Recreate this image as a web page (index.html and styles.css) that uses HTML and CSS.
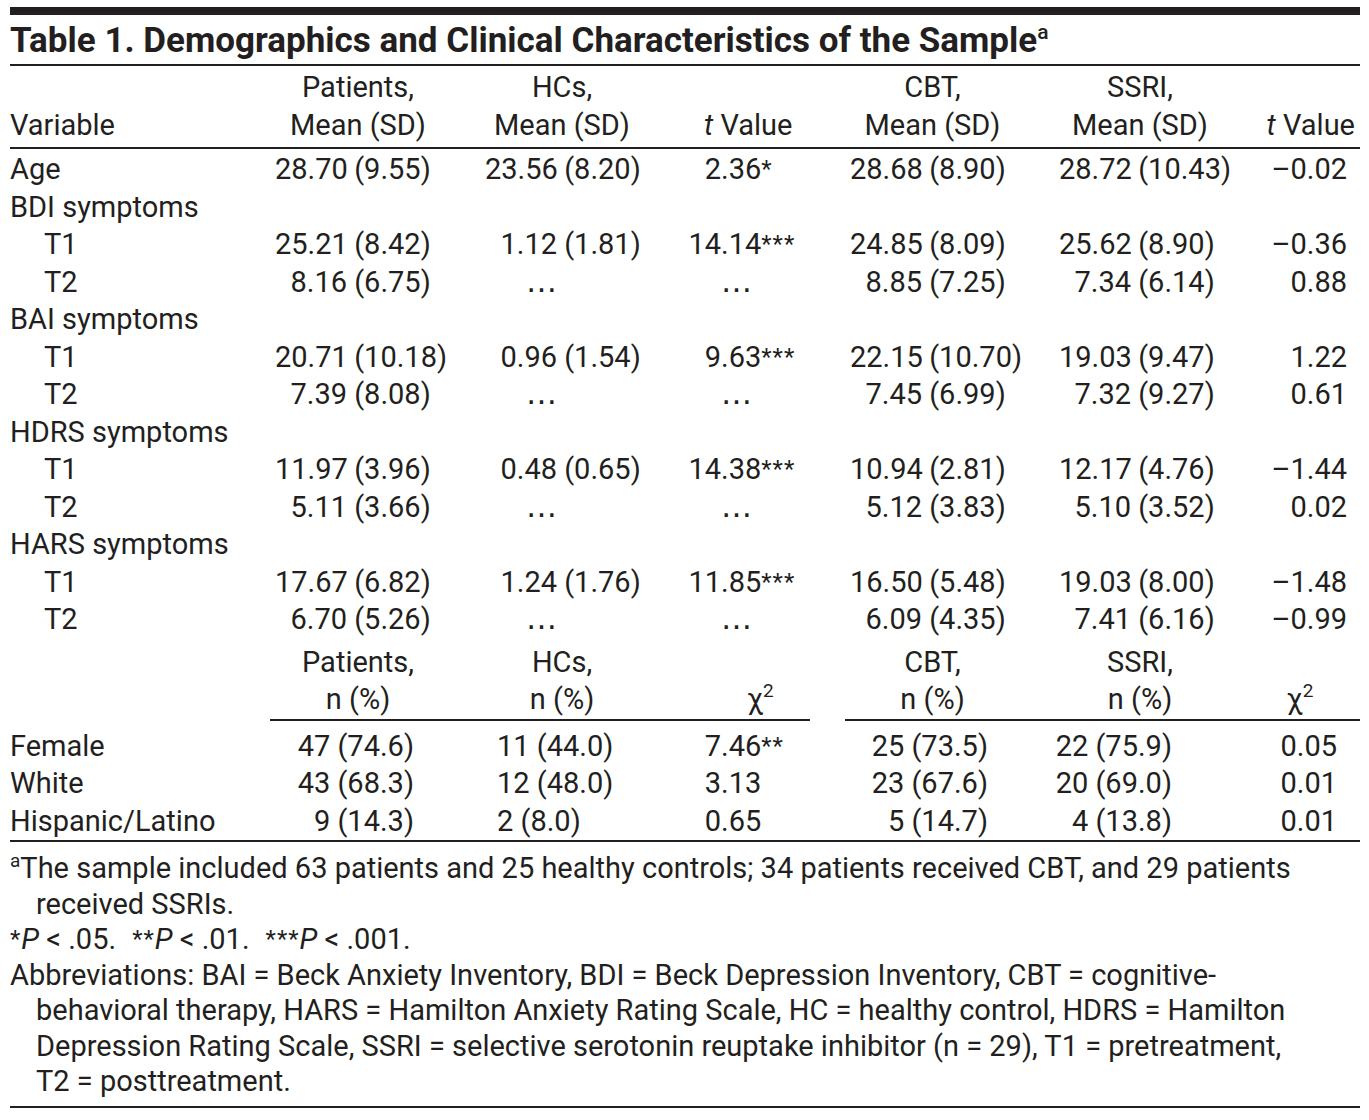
FILE: index.html
```html
<!DOCTYPE html>
<html lang="en">
<head>
<meta charset="utf-8">
<title>Table 1. Demographics and Clinical Characteristics of the Sample</title>
<link rel="stylesheet" href="styles.css">
</head>
<body>
<div class="page">
  <div class="topbar"></div>
  <h1 class="title">Table 1. Demographics and Clinical Characteristics of the Sample<sup>a</sup></h1>
  <table class="data">
    <colgroup>
      <col class="w-var"><col class="w-pat"><col class="w-hc"><col class="w-t"><col class="w-gap"><col class="w-cbt"><col class="w-ssri"><col class="w-t2">
    </colgroup>
    <thead>
      <tr>
        <th>Variable</th>
        <th>Patients,<br>Mean (SD)</th>
        <th>HCs,<br>Mean (SD)</th>
        <th><i>t</i> Value</th>
        <th></th>
        <th>CBT,<br>Mean (SD)</th>
        <th>SSRI,<br>Mean (SD)</th>
        <th><i>t</i> Value</th>
      </tr>
    </thead>
    <tbody class="means">
      <tr class="first">
        <td>Age</td>
        <td><span class="m">28.70</span> (9.55)</td>
        <td><span class="m">23.56</span> (8.20)</td>
        <td><span class="i">2</span>.36<span class="ast">*</span></td>
        <td></td>
        <td><span class="m">28.68</span> (8.90)</td>
        <td><span class="m">28.72</span> (10.43)</td>
        <td>–0.02</td>
      </tr>
      <tr><td>BDI symptoms</td><td></td><td></td><td></td><td></td><td></td><td></td><td></td></tr>
      <tr>
        <td class="sub">T1</td>
        <td><span class="m">25.21</span> (8.42)</td>
        <td><span class="m">1.12</span> (1.81)</td>
        <td><span class="i">14</span>.14<span class="ast">***</span></td>
        <td></td>
        <td><span class="m">24.85</span> (8.09)</td>
        <td><span class="m">25.62</span> (8.90)</td>
        <td>–0.36</td>
      </tr>
      <tr>
        <td class="sub">T2</td>
        <td><span class="m">8.16</span> (6.75)</td>
        <td><span class="m"><span class="ell">…</span></span></td>
        <td><span class="i"></span><span class="ell">…</span></td>
        <td></td>
        <td><span class="m">8.85</span> (7.25)</td>
        <td><span class="m">7.34</span> (6.14)</td>
        <td>0.88</td>
      </tr>
      <tr><td>BAI symptoms</td><td></td><td></td><td></td><td></td><td></td><td></td><td></td></tr>
      <tr>
        <td class="sub">T1</td>
        <td><span class="m">20.71</span> (10.18)</td>
        <td><span class="m">0.96</span> (1.54)</td>
        <td><span class="i">9</span>.63<span class="ast">***</span></td>
        <td></td>
        <td><span class="m">22.15</span> (10.70)</td>
        <td><span class="m">19.03</span> (9.47)</td>
        <td>1.22</td>
      </tr>
      <tr>
        <td class="sub">T2</td>
        <td><span class="m">7.39</span> (8.08)</td>
        <td><span class="m"><span class="ell">…</span></span></td>
        <td><span class="i"></span><span class="ell">…</span></td>
        <td></td>
        <td><span class="m">7.45</span> (6.99)</td>
        <td><span class="m">7.32</span> (9.27)</td>
        <td>0.61</td>
      </tr>
      <tr><td>HDRS symptoms</td><td></td><td></td><td></td><td></td><td></td><td></td><td></td></tr>
      <tr>
        <td class="sub">T1</td>
        <td><span class="m">11.97</span> (3.96)</td>
        <td><span class="m">0.48</span> (0.65)</td>
        <td><span class="i">14</span>.38<span class="ast">***</span></td>
        <td></td>
        <td><span class="m">10.94</span> (2.81)</td>
        <td><span class="m">12.17</span> (4.76)</td>
        <td>–1.44</td>
      </tr>
      <tr>
        <td class="sub">T2</td>
        <td><span class="m">5.11</span> (3.66)</td>
        <td><span class="m"><span class="ell">…</span></span></td>
        <td><span class="i"></span><span class="ell">…</span></td>
        <td></td>
        <td><span class="m">5.12</span> (3.83)</td>
        <td><span class="m">5.10</span> (3.52)</td>
        <td>0.02</td>
      </tr>
      <tr><td>HARS symptoms</td><td></td><td></td><td></td><td></td><td></td><td></td><td></td></tr>
      <tr>
        <td class="sub">T1</td>
        <td><span class="m">17.67</span> (6.82)</td>
        <td><span class="m">1.24</span> (1.76)</td>
        <td><span class="i">11</span>.85<span class="ast">***</span></td>
        <td></td>
        <td><span class="m">16.50</span> (5.48)</td>
        <td><span class="m">19.03</span> (8.00)</td>
        <td>–1.48</td>
      </tr>
      <tr>
        <td class="sub">T2</td>
        <td><span class="m">6.70</span> (5.26)</td>
        <td><span class="m"><span class="ell">…</span></span></td>
        <td><span class="i"></span><span class="ell">…</span></td>
        <td></td>
        <td><span class="m">6.09</span> (4.35)</td>
        <td><span class="m">7.41</span> (6.16)</td>
        <td>–0.99</td>
      </tr>
    </tbody>
    <tbody class="counts">
      <tr class="subhead">
        <th></th>
        <th>Patients,<br>n (%)</th>
        <th>HCs,<br>n (%)</th>
        <th>χ<sup>2</sup></th>
        <th class="gap"></th>
        <th>CBT,<br>n (%)</th>
        <th>SSRI,<br>n (%)</th>
        <th>χ<sup>2</sup></th>
      </tr>
      <tr class="first">
        <td>Female</td>
        <td>47 (74.6)</td>
        <td>11 (44.0)</td>
        <td><span class="i">7</span>.46<span class="ast">**</span></td>
        <td></td>
        <td>25 (73.5)</td>
        <td>22 (75.9)</td>
        <td>0.05</td>
      </tr>
      <tr>
        <td>White</td>
        <td>43 (68.3)</td>
        <td>12 (48.0)</td>
        <td><span class="i">3</span>.13</td>
        <td></td>
        <td>23 (67.6)</td>
        <td>20 (69.0)</td>
        <td>0.01</td>
      </tr>
      <tr class="last">
        <td>Hispanic/Latino</td>
        <td>9 (14.3)</td>
        <td>2 (8.0)</td>
        <td><span class="i">0</span>.65</td>
        <td></td>
        <td>5 (14.7)</td>
        <td>4 (13.8)</td>
        <td>0.01</td>
      </tr>
    </tbody>
  </table>
  <div class="notes">
    <p class="note"><sup>a</sup>The sample included 63 patients and 25 healthy controls; 34 patients received CBT, and 29 patients<br>received SSRIs.</p>
    <p class="note"><span class="ast">*</span><i>P</i> &lt; .05.<span class="sp"></span><span class="ast">**</span><i>P</i> &lt; .01.<span class="sp"></span><span class="ast">***</span><i>P</i> &lt; .001.</p>
    <p class="note">Abbreviations: BAI = Beck Anxiety Inventory, BDI = Beck Depression Inventory, CBT = cognitive-<br>behavioral therapy, HARS = Hamilton Anxiety Rating Scale, HC = healthy control, HDRS = Hamilton<br>Depression Rating Scale, SSRI = selective serotonin reuptake inhibitor (n = 29), T1 = pretreatment,<br>T2 = posttreatment.</p>
  </div>
</div>
</body>
</html>
```

FILE: styles.css
```css
html, body {
  margin: 0;
  padding: 0;
  background: #ffffff;
}

body {
  font-family: Roboto, "Liberation Sans", sans-serif;
  color: #231f20;
  font-size: 29px;
}

.page {
  width: 1350px;
  padding: 7px 0 0 10px;
}

.topbar {
  height: 8px;
  background: #231f20;
}

.title {
  margin: 0;
  height: 49px;
  line-height: 51px;
  font-size: 35px;
  font-weight: 700;
  white-space: nowrap;
  border-bottom: 2px solid #231f20;
}

.title sup {
  font-size: 21px;
  font-weight: 500;
  line-height: 0;
  vertical-align: 13px;
}

.data {
  width: 1350px;
  table-layout: fixed;
  border-collapse: separate;
  border-spacing: 0;
}

.w-var { width: 260px; }
.w-pat { width: 195px; }
.w-hc { width: 200px; }
.w-t { width: 145px; }
.w-gap { width: 35px; }
.w-cbt { width: 195px; }
.w-ssri { width: 200px; }
.w-t2 { width: 120px; }

.data th,
.data td {
  padding: 0;
  line-height: 37.5px;
  font-weight: 400;
  white-space: nowrap;
  vertical-align: bottom;
  text-align: left;
}

.data i {
  font-style: italic;
}

/* header */
.data thead th {
  padding-top: 3px;
  padding-bottom: 3px;
  border-bottom: 2px solid #231f20;
}
.data th:nth-child(2) { text-align: center; padding-right: 19px; }
.data th:nth-child(3) { text-align: center; padding-right: 6px; }
.data th:nth-child(4) { padding-left: 39px; }
.data th:nth-child(6) { text-align: center; padding-right: 20px; }
.data th:nth-child(7) { text-align: center; }
.data th:nth-child(8) { text-align: right; padding-right: 5px; }

.data .subhead th {
  padding-top: 5px;
  border-bottom: 2px solid #231f20;
}
.data .subhead th:first-child,
.data .subhead th.gap {
  border-bottom: 0;
}
.data .subhead th:nth-child(4) { padding-left: 82px; }
.data .subhead th:nth-child(8) { text-align: center; padding-right: 0; }

.data sup {
  font-size: 19px;
  line-height: 0;
  vertical-align: 12px;
}

/* mean rows */
.means .first td { padding-top: 2px; }
.data td.sub { padding-left: 34px; }
.means td:nth-child(2) { padding-left: 5px; }
.means td:nth-child(3) { padding-left: 20px; }
.means td:nth-child(4) { padding-left: 20px; }
.means td:nth-child(6) { padding-left: 5px; }
.means td:nth-child(7) { padding-left: 19px; }
.means td:nth-child(8) { text-align: right; padding-right: 13px; }

.data .m {
  display: inline-block;
  width: 72px;
  text-align: right;
}

.data .i {
  display: inline-block;
  width: 36px;
  text-align: right;
}

.ell {
  font-family: "DejaVu Sans", sans-serif;
  font-size: 31px;
  line-height: 0;
}

.ast {
  font-size: 24px;
  line-height: 0;
  letter-spacing: 1px;
  vertical-align: 2px;
}

/* count rows */
.counts .first td { padding-top: 7px; }
.counts .last td { border-bottom: 2px solid #231f20; }
.counts td:nth-child(2) { text-align: right; padding-right: 51px; }
.counts td:nth-child(3) { padding-left: 32px; }
.counts td:nth-child(4) { padding-left: 20px; }
.counts td:nth-child(6) { text-align: right; padding-right: 52px; }
.counts td:nth-child(7) { text-align: right; padding-right: 68px; }
.counts td:nth-child(8) { text-align: right; padding-right: 23px; }

/* notes */
.notes {
  padding: 9px 0 6px;
  border-bottom: 2px solid #231f20;
}

.note {
  margin: 0;
  line-height: 35.5px;
  padding-left: 26px;
  text-indent: -26px;
  white-space: nowrap;
}

.note sup {
  font-size: 19px;
  line-height: 0;
  vertical-align: 11px;
}

.note .sp {
  display: inline-block;
  width: 16px;
}
```
